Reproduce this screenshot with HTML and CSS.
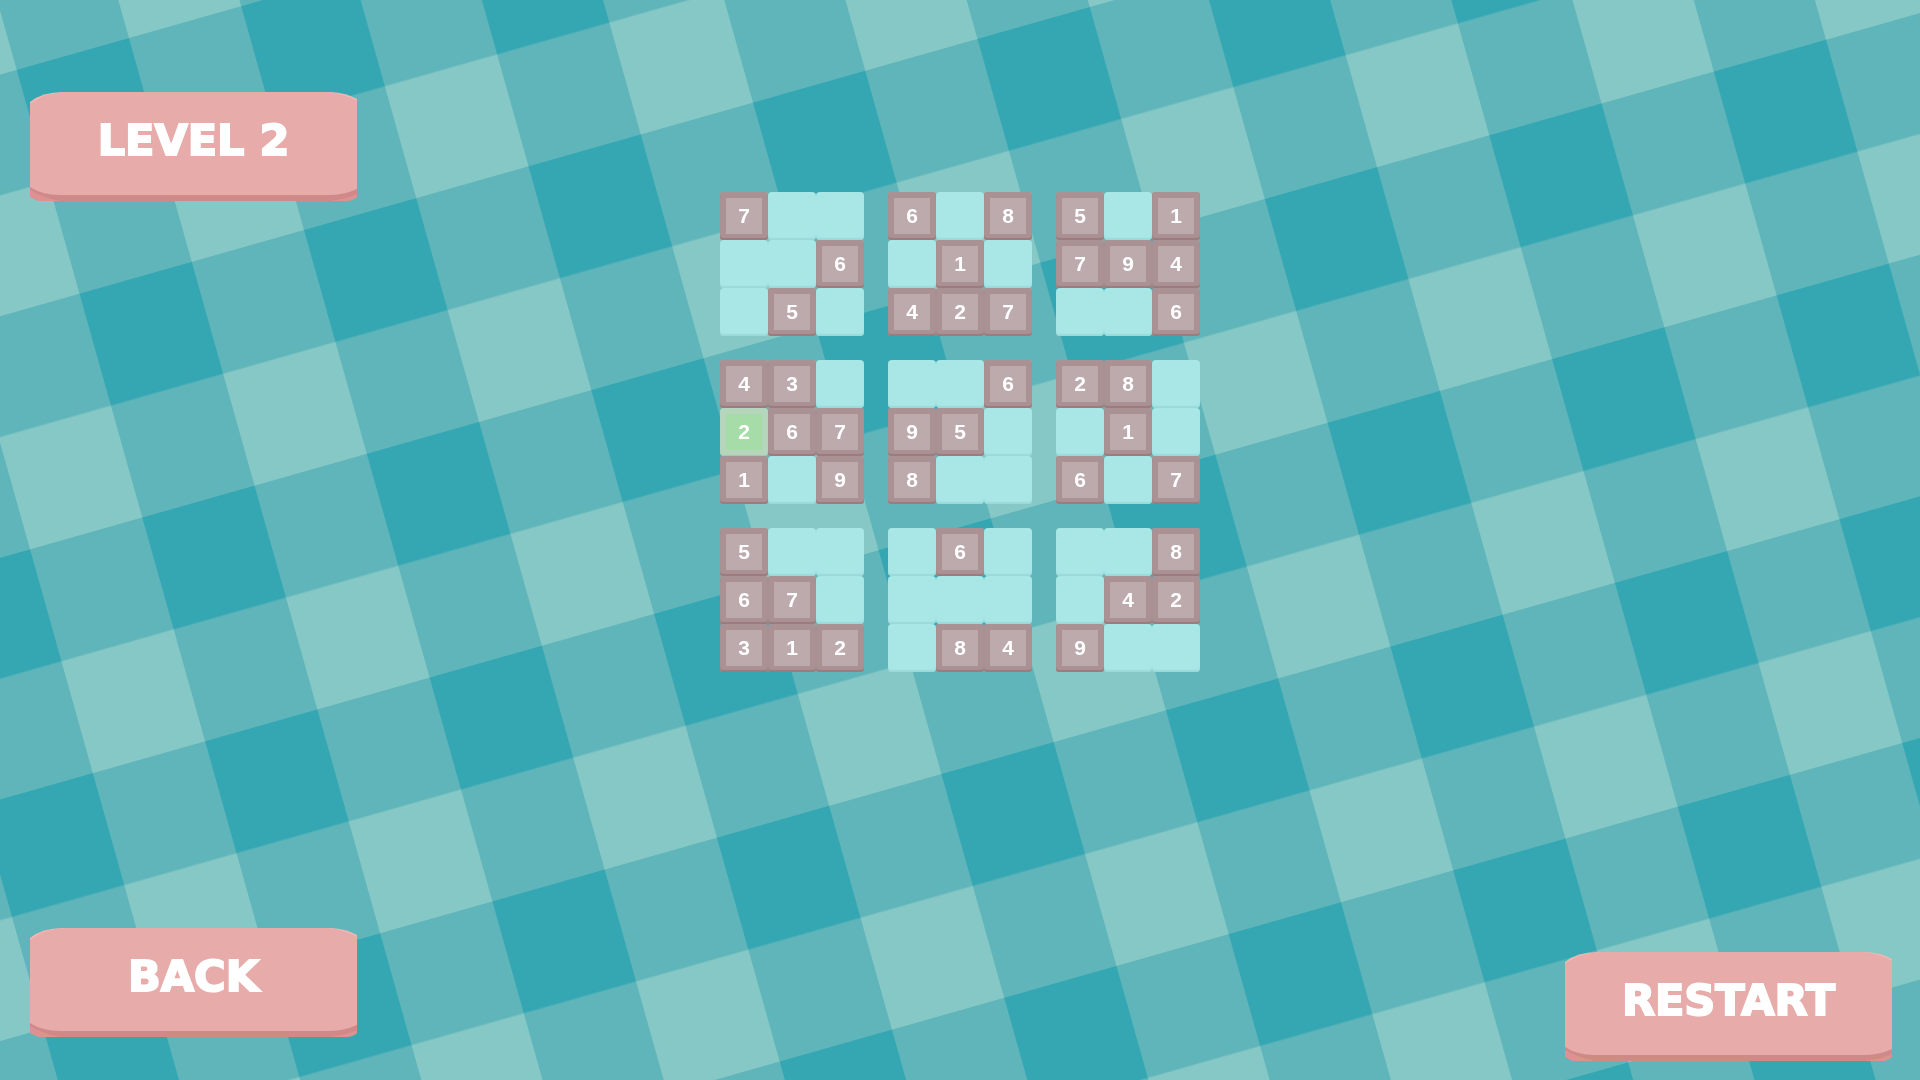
FILE: index.html
```html
<!DOCTYPE html>
<html lang="en">
<head>
    <meta charset="UTF-8">
    <meta name="viewport" content="width=device-width, initial-scale=1.0">
    <title>Sudoku - Level 2</title>
    <link rel="stylesheet" href="styles.css">
</head>
<body>
    <svg class="backdrop" aria-hidden="true">
        <defs>
            <pattern id="gingham" width="200" height="200" patternUnits="userSpaceOnUse" patternTransform="matrix(1.1225 -0.3185 0.314 1.119 304 230)">
                <rect width="200" height="200" fill="#5fb5ba"/>
                <rect width="100" height="100" fill="#34a7b3"/>
                <rect x="100" y="100" width="100" height="100" fill="#86c8c5"/>
            </pattern>
            <symbol id="plate" viewBox="0 0 327 109" preserveAspectRatio="none">
                <path d="M0 90V105Q4 107 8 109H318Q324 108 327 105V90Z" fill="#dd9190"/>
                <path d="M0 90V98Q14 106 30 109H300Q316 107 327 102V90Z" fill="#d08989"/>
                <path d="M0 10Q12 0 33 0H300Q317 1 327 7V20H0Z" fill="#f3b6b5"/>
                <path d="M0 12Q14 1 35 0H298Q315 2 327 9V97Q314 103 298 103H30Q12 103 0 95Z" fill="#e7abaa"/>
            </symbol>
        </defs>
        <rect width="100%" height="100%" fill="url(#gingham)"/>
    </svg>

    <main class="game">
        <div class="side side-left">
            <h1 class="plate">
                <svg class="plate-shape" aria-hidden="true"><use href="#plate"/></svg>
                <span class="plate-text">LEVEL 2</span>
            </h1>
            <button class="plate" type="button">
                <svg class="plate-shape" aria-hidden="true"><use href="#plate"/></svg>
                <span class="plate-text">BACK</span>
            </button>
        </div>

        <div class="board" id="board"></div>

        <div class="side side-right">
            <button class="plate" type="button" id="restart">
                <svg class="plate-shape" aria-hidden="true"><use href="#plate"/></svg>
                <span class="plate-text">RESTART</span>
            </button>
        </div>
    </main>

    <script src="script.js"></script>
</body>
</html>
```
FILE: styles.css
```css
/* General Styles */
* {
    box-sizing: border-box;
}

body {
    margin: 0;
    font-family: 'DejaVu Sans', 'Arial Black', sans-serif;
    background-color: #5fb5ba;
    color: white;
}

.backdrop {
    position: fixed;
    top: 0;
    left: 0;
    width: 100%;
    height: 100%;
    z-index: -1;
}

.game {
    display: grid;
    grid-template-columns: 1fr auto 1fr;
    min-height: 100vh;
}

/* Side columns */
.side {
    display: flex;
    flex-direction: column;
}

.side-left {
    justify-content: space-between;
    align-items: flex-start;
    padding: 92px 0 43px 30px;
}

.side-right {
    justify-content: flex-end;
    align-items: flex-end;
    padding: 0 28px 19px 0;
}

/* Level sign and buttons */
.plate {
    position: relative;
    display: flex;
    align-items: center;
    justify-content: center;
    width: 327px;
    height: 109px;
    margin: 0;
    padding: 0 0 14px;
    border: none;
    background: none;
    color: white;
    font-family: inherit;
    font-size: 43px;
    font-weight: 700;
    line-height: 48px;
}

button.plate {
    cursor: pointer;
}

.plate-shape {
    position: absolute;
    top: 0;
    left: 0;
    width: 100%;
    height: 100%;
}

.plate-text {
    position: relative;
    -webkit-text-stroke: 2px white;
    text-shadow: 0 0 1px rgba(110, 80, 80, 0.5);
}

/* Board */
.board {
    display: grid;
    grid-template-columns: repeat(3, auto);
    gap: 24px;
    align-content: start;
    padding-top: 192px;
}

.box {
    display: grid;
    grid-template-columns: repeat(3, 48px);
    grid-auto-rows: 48px;
}

.cell {
    padding: 0;
    border: none;
    border-radius: 4px;
    background: #a9e7e6;
    box-shadow: inset 0 -2px 1px #9adad9;
    color: white;
    font-family: 'Liberation Sans', Arial, sans-serif;
    font-size: 21px;
    font-weight: 700;
    line-height: 48px;
    cursor: pointer;
}

.given {
    border-radius: 3px;
    background: #bcaaac;
    box-shadow: inset 0 -2px 1px #9c7a7d, inset 0 0 0 6px #aa9294;
    cursor: default;
}

.entered {
    background: #a5dca8;
    box-shadow: inset 0 -1px 1px #a3c8ad, inset 0 0 0 6px #b5d6bd;
}
```
FILE: script.js
```javascript
// One string per 3x3 box, 0 is an empty cell
const boxes = [
    '700006050', '608010427', '501794006',
    '430267109', '006950800', '280010607',
    '500670312', '060000084', '008042900'
];

// Cells filled in by the player, as box:cell
const entered = ['3:3'];

const board = document.getElementById('board');

function drawBoard() {
    board.innerHTML = '';
    boxes.forEach((digits, b) => {
        const box = document.createElement('div');
        box.className = 'box';
        [...digits].forEach((digit, c) => {
            const cell = document.createElement('button');
            cell.type = 'button';
            cell.className = 'cell';
            if (digit !== '0') {
                cell.textContent = digit;
                cell.classList.add(entered.includes(`${b}:${c}`) ? 'entered' : 'given');
            } else {
                cell.setAttribute('aria-label', 'Empty cell');
            }
            box.appendChild(cell);
        });
        board.appendChild(box);
    });
}

document.getElementById('restart').addEventListener('click', drawBoard);
drawBoard();
```
